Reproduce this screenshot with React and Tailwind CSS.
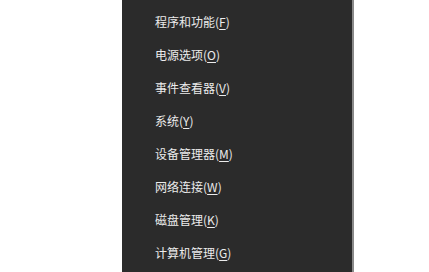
const items = [
    { label: "程序和功能", key: "F" },
    { label: "电源选项", key: "O" },
    { label: "事件查看器", key: "V" },
    { label: "系统", key: "Y" },
    { label: "设备管理器", key: "M" },
    { label: "网络连接", key: "W" },
    { label: "磁盘管理", key: "K" },
    { label: "计算机管理", key: "G" },
];

export default function App() {
    return (
        <div className="w-[429px] h-[272px] bg-white overflow-hidden flex">
            <div className="ml-[122px] w-[232px] h-full bg-[#2b2b2b] border-r-2 border-[#8a8a8a] pt-[5px] font-['Noto_Sans_CJK_SC',sans-serif] text-[12px] text-[#ececec]">
                {items.map((item) => (
                    <div
                        key={item.key}
                        className="h-[33px] pl-[33px] flex items-center"
                    >
                        {item.label}(
                        <span className="underline underline-offset-2">
                            {item.key}
                        </span>
                        )
                    </div>
                ))}
            </div>
        </div>
    );
}
